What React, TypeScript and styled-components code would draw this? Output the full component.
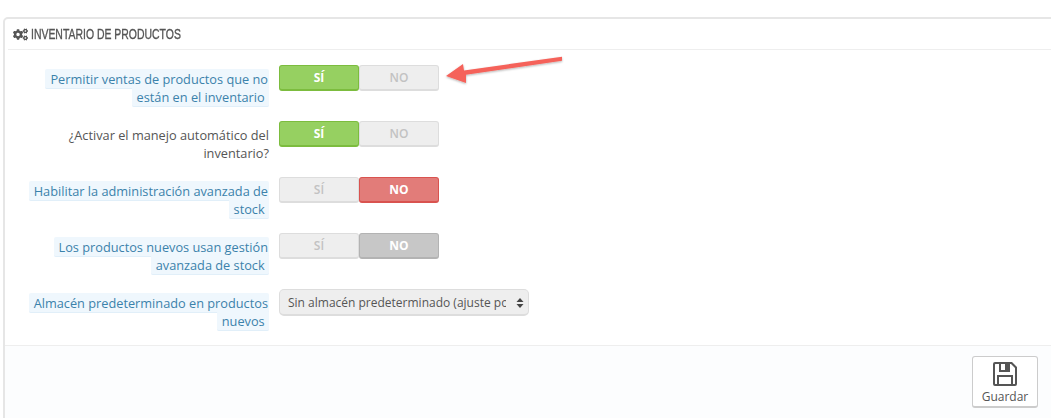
import React from "react";
import styled, { createGlobalStyle } from "styled-components";
import { FaCogs } from "react-icons/fa";

const Global = createGlobalStyle`
  html, body { margin: 0; padding: 0; background: #fff; overflow: hidden; }
  body { font-family: "Open Sans", "Liberation Sans", sans-serif; font-size: 12px; color: #555; }
`;

const Page = styled.div`
  position: relative;
  width: 1051px;
  height: 418px;
  overflow: hidden;
  padding: 17px 0 0 3px;
  box-sizing: border-box;
`;

const Panel = styled.section`
  width: 1060px;
  height: 420px;
  box-sizing: border-box;
  border: 2px solid #e6e6e6;
  border-width: 2px 1px 1px 2px;
  border-radius: 5px 5px 0 0;
  background: #fff;
  display: flex;
  flex-direction: column;
`;

const Header = styled.h3`
  margin: 0 0 0 3px;
  height: 30px;
  display: flex;
  align-items: center;
  gap: 3px;
  padding-left: 5px;
  border-bottom: 1px solid #eee;
  font-size: 14.5px;
  font-weight: 400;
  color: #555;
`;

const Title = styled.span`
  display: inline-block;
  font-family: "Liberation Sans", sans-serif;
  text-transform: uppercase;
  white-space: nowrap;
  transform: scaleX(0.72);
  transform-origin: left center;
  -webkit-text-stroke: 0.35px #555;
`;

const Form = styled.div`
  padding-top: 15px;
  display: flex;
  flex-direction: column;
`;

const Row = styled.div`
  height: 56px;
  display: flex;
  gap: 10px;
`;

const LabelCell = styled.div`
  width: 264px;
  flex: none;
  padding: 5px 0 0 15px;
  box-sizing: border-box;
  text-align: right;
  font-size: 12.75px;
  line-height: 18px;
`;

const Hint = styled.span<{ $hint?: boolean }>`
  color: ${(p) => (p.$hint ? "#3b82ab" : "#555")};
  ${(p) =>
    p.$hint
      ? `background: #eff7fd;
  border-bottom: 1px solid #e1eff9;
  border-radius: 2px;
  padding: 1px 1px 0 5px;
  -webkit-box-decoration-break: clone;
  box-decoration-break: clone;`
      : ""}
`;

const Toggle = styled.div`
  display: flex;
  width: 160px;
  height: 26px;
`;

type Tone = "yes" | "no" | "neutral" | "off";

const toneStyles: Record<Tone, string> = {
  yes: "background:#96d061;border-color:#7cbc3e;color:#fff;",
  no: "background:#e27c79;border-color:#d9534f;color:#fff;",
  neutral: "background:#c7c7c7;border-color:#b3b3b3;color:#fff;",
  off: "background:#eee;border-color:#ddd;color:#c2c2c2;",
};

const ToggleOption = styled.div<{ $tone: Tone }>`
  flex: 1;
  box-sizing: border-box;
  display: flex;
  align-items: center;
  justify-content: center;
  border: 1px solid;
  border-bottom-width: 2px;
  border-radius: 3px;
  font-size: 12px;
  font-weight: ${(p) => (p.$tone === "off" ? 600 : 700)};
  ${(p) => toneStyles[p.$tone]}
`;

const SelectWrap = styled.div`
  position: relative;
  width: 250px;
  height: 27px;
`;

const Select = styled.select`
  appearance: none;
  width: 100%;
  height: 100%;
  box-sizing: border-box;
  border: 1px solid #ddd;
  border-bottom-width: 2px;
  border-radius: 5px;
  background: #eee;
  color: #555;
  padding: 0 22px 0 8px;
  font-family: "Open Sans", sans-serif;
  font-size: 12px;
  outline: none;
`;

const Caret = styled.svg`
  position: absolute;
  right: 5px;
  top: 9px;
  pointer-events: none;
`;

const Footer = styled.div`
  flex: 1;
  background: #fcfdfe;
  border-top: 1px solid #eee;
  padding: 10px 0 0 967px;
`;

const SaveButton = styled.button`
  width: 66px;
  height: 52px;
  box-sizing: border-box;
  padding: 4px 0 0;
  border: 1px solid #ccc;
  border-bottom-width: 2px;
  border-radius: 3px;
  background: #fff;
  color: #555;
  font-family: "Open Sans", sans-serif;
  font-size: 12px;
  display: flex;
  flex-direction: column;
  align-items: center;
  gap: 1px;
`;

const Arrow = styled.svg`
  position: absolute;
  left: 440px;
  top: 50px;
`;

const Cogs = styled(FaCogs)`
  width: 15px;
  height: 13px;
  color: #555;
`;

const rows: { label: string; hint: boolean; on: "si" | "no"; tone?: Tone }[] = [
  { label: "Permitir ventas de productos que no están en el inventario\u00a0", hint: true, on: "si" },
  { label: "¿Activar el manejo automático del inventario?", hint: false, on: "si" },
  { label: "Habilitar la administración avanzada de stock\u00a0", hint: true, on: "no", tone: "no" },
  { label: "Los productos nuevos usan gestión avanzada de stock\u00a0", hint: true, on: "no", tone: "neutral" },
];

export default function App() {
  return (
    <Page>
      <Global />
      <Panel>
        <Header>
          <Cogs />
          <Title>Inventario de productos</Title>
        </Header>
        <Form>
          {rows.map((r) => (
            <Row key={r.label}>
              <LabelCell>
                <Hint $hint={r.hint}>{r.label}</Hint>
              </LabelCell>
              <Toggle>
                <ToggleOption $tone={r.on === "si" ? "yes" : "off"}>SÍ</ToggleOption>
                <ToggleOption $tone={r.on === "no" ? r.tone ?? "no" : "off"}>NO</ToggleOption>
              </Toggle>
            </Row>
          ))}
          <Row>
            <LabelCell>
              <Hint $hint>Almacén predeterminado en productos nuevos{"\u00a0"}</Hint>
            </LabelCell>
            <SelectWrap>
              <Select defaultValue="0">
                <option value="0">Sin almacén predeterminado (ajuste por defecto)</option>
              </Select>
              <Caret width="8" height="10" viewBox="0 0 8 10">
                <path d="M4 0 L7.5 4 H0.5 Z M4 10 L0.5 6 H7.5 Z" fill="#444" />
              </Caret>
            </SelectWrap>
          </Row>
        </Form>
        <Footer>
          <SaveButton>
            <svg width="26" height="26" viewBox="0 0 26 26">
              <path
                fillRule="evenodd"
                fill="#555"
                d="M3 1 H20 L25 6 V23 a2 2 0 0 1 -2 2 H3 a2 2 0 0 1 -2 -2 V3 a2 2 0 0 1 2 -2 Z M3.5 3 a0.5 0.5 0 0 0 -0.5 0.5 V22.5 a0.5 0.5 0 0 0 0.5 0.5 H5 V14 H21 V23 H22.5 a0.5 0.5 0 0 0 0.5 -0.5 V7 L19 3 H18 V11 H7 V3 Z M7 16 V23 H19 V16 Z M9 3 V9 H13 V3 Z"
              />
            </svg>
            Guardar
          </SaveButton>
        </Footer>
      </Panel>
      <Arrow width="130" height="40" viewBox="0 0 130 40">
        <defs>
          <filter id="arrowShadow" x="-10%" y="-30%" width="120%" height="170%">
            <feDropShadow dx="0" dy="1" stdDeviation="1" floodColor="#000" floodOpacity="0.3" />
          </filter>
        </defs>
        <path
          d="M6 26 L23 14 L24 20.5 L122 6.7 L122 10.7 L26 24.7 L26 33 Z"
          fill="#f5625a"
          filter="url(#arrowShadow)"
        />
      </Arrow>
    </Page>
  );
}
